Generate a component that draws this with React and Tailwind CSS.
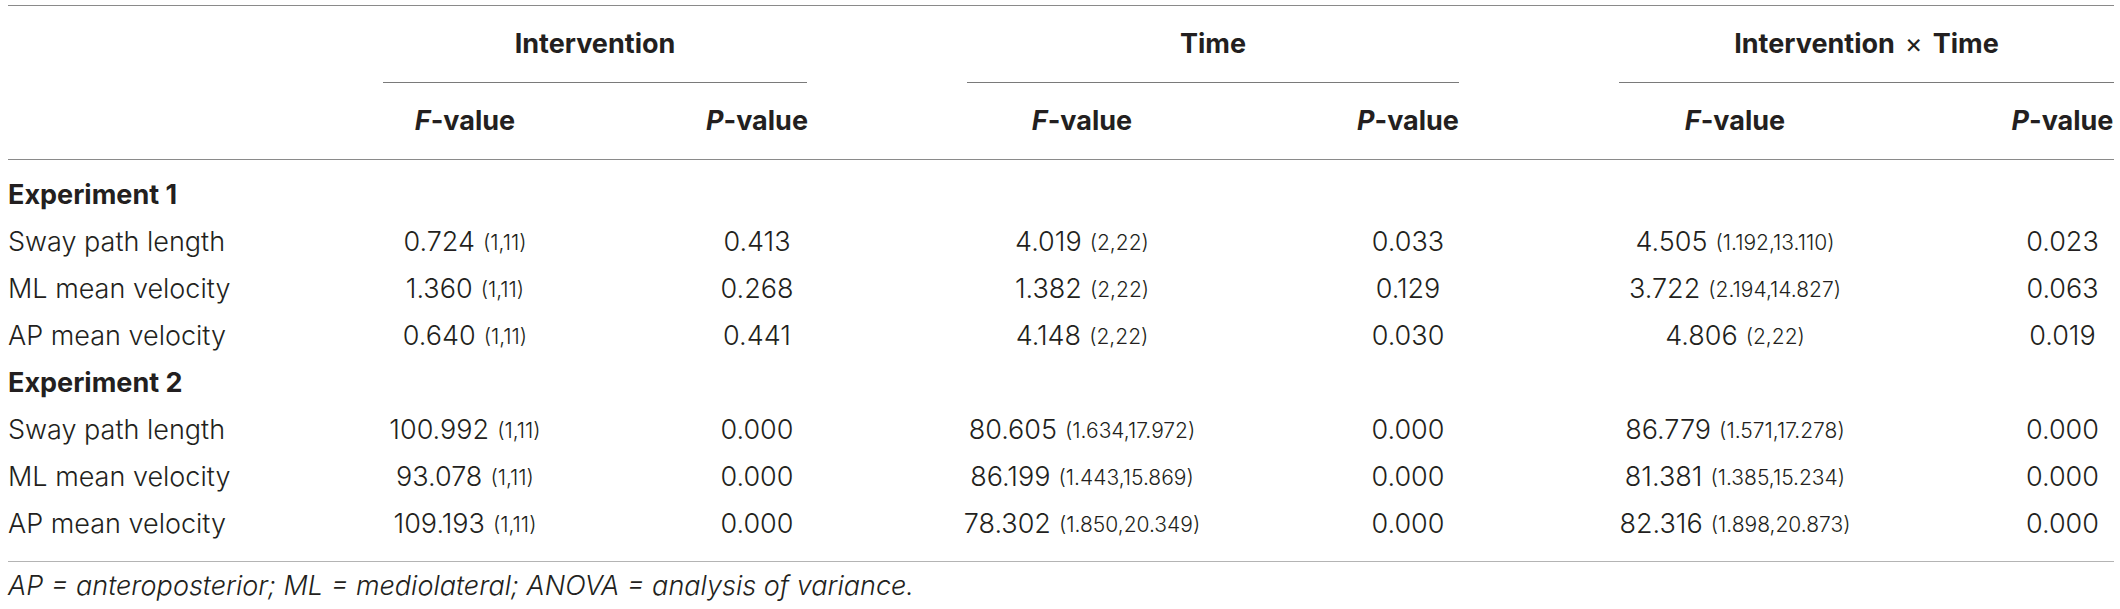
import React from "react";

const GRID =
  "grid grid-cols-[215px_164px_100px_230px_102px_232px_103px] gap-x-[160px]";

function Sub({ children }) {
  return (
    <span className="text-[21px] align-[-8px] ml-[8px]">{children}</span>
  );
}

function FVal({ v, d }) {
  return (
    <div className="h-[47px] flex items-center justify-center whitespace-nowrap">
      <span>{v}</span>
      <Sub>{d}</Sub>
    </div>
  );
}

function PVal({ v }) {
  return (
    <div className="h-[47px] flex items-center justify-center whitespace-nowrap">{v}</div>
  );
}

const rows = [
  { type: "section", label: "Experiment 1" },
  {
    label: "Sway path length",
    c: [["0.724", "(1,11)"], "0.413", ["4.019", "(2,22)"], "0.033", ["4.505", "(1.192,13.110)"], "0.023"],
  },
  {
    label: "ML mean velocity",
    c: [["1.360", "(1,11)"], "0.268", ["1.382", "(2,22)"], "0.129", ["3.722", "(2.194,14.827)"], "0.063"],
  },
  {
    label: "AP mean velocity",
    c: [["0.640", "(1,11)"], "0.441", ["4.148", "(2,22)"], "0.030", ["4.806", "(2,22)"], "0.019"],
  },
  { type: "section", label: "Experiment 2" },
  {
    label: "Sway path length",
    c: [["100.992", "(1,11)"], "0.000", ["80.605", "(1.634,17.972)"], "0.000", ["86.779", "(1.571,17.278)"], "0.000"],
  },
  {
    label: "ML mean velocity",
    c: [["93.078", "(1,11)"], "0.000", ["86.199", "(1.443,15.869)"], "0.000", ["81.381", "(1.385,15.234)"], "0.000"],
  },
  {
    label: "AP mean velocity",
    c: [["109.193", "(1,11)"], "0.000", ["78.302", "(1.850,20.349)"], "0.000", ["82.316", "(1.898,20.873)"], "0.000"],
  },
];

function HeadCell({ letter }) {
  return (
    <div className="h-[76px] flex items-center justify-center whitespace-nowrap font-bold">
      <span className="italic">{letter}</span>
      <span>-value</span>
    </div>
  );
}

export default function App() {
  return (
    <div className="w-[2120px] h-[609px] bg-white pt-[5px] pl-[8px] pr-[6px] text-[#231f20] font-['Inter','Liberation_Sans',sans-serif] text-[27px] font-light overflow-hidden">
      <div className="border-t border-[#8a8a8a]">
        {/* header */}
        <div className={GRID + " border-b border-[#8a8a8a]"}>
          <div className="h-[77px]" />
          <div className="col-span-2 h-[77px] border-b border-[#7a7a7a] flex items-center justify-center font-bold">
            Intervention
          </div>
          <div className="col-span-2 h-[77px] border-b border-[#7a7a7a] flex items-center justify-center font-bold">
            Time
          </div>
          <div className="col-span-2 h-[77px] border-b border-[#7a7a7a] flex items-center justify-center font-bold whitespace-nowrap">
            Intervention <span className="font-normal mx-[10px]">×</span> Time
          </div>

          <div className="h-[76px]" />
          <HeadCell letter="F" />
          <HeadCell letter="P" />
          <HeadCell letter="F" />
          <HeadCell letter="P" />
          <HeadCell letter="F" />
          <HeadCell letter="P" />
        </div>

        {/* body */}
        <div className={GRID + " pt-[12px] pb-[13px] border-b border-[#b4b4b4]"}>
          {rows.map((r, i) =>
            r.type === "section" ? (
              <div key={i} className="col-span-7 h-[47px] flex items-center font-bold">
                {r.label}
              </div>
            ) : (
              <React.Fragment key={i}>
                <div className="h-[47px] flex items-center whitespace-nowrap">{r.label}</div>
                <FVal v={r.c[0][0]} d={r.c[0][1]} />
                <PVal v={r.c[1]} />
                <FVal v={r.c[2][0]} d={r.c[2][1]} />
                <PVal v={r.c[3]} />
                <FVal v={r.c[4][0]} d={r.c[4][1]} />
                <PVal v={r.c[5]} />
              </React.Fragment>
            )
          )}
        </div>

        {/* footnote */}
        <div className="h-[48px] flex items-center italic whitespace-nowrap">
          AP = anteroposterior; ML = mediolateral; ANOVA = analysis of variance.
        </div>
      </div>
    </div>
  );
}
